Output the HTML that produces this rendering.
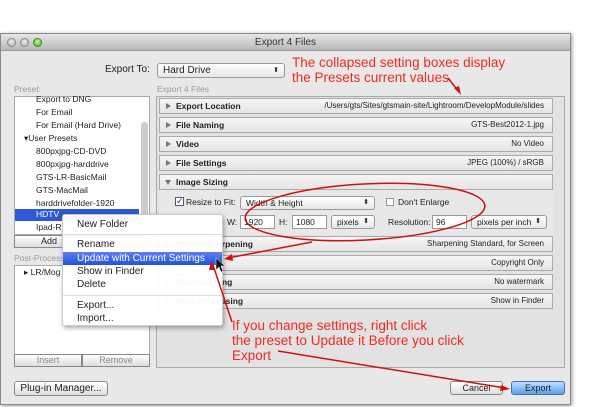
<!DOCTYPE html>
<html><head><style>
*{box-sizing:border-box;margin:0;padding:0}
body{width:600px;height:407px;background:#fff;position:relative;overflow:hidden;font-family:"Liberation Sans",sans-serif;font-size:9px;color:#222}
.a{position:absolute}
.win{left:0;top:33px;width:571px;height:372px;background:#e8e8e8;border:1px solid #888;box-shadow:1px 1px 4px rgba(0,0,0,.4)}
.title{left:0;top:0;width:569px;height:17px;background:linear-gradient(#e6e6e6,#b8b8b8);border-bottom:1px solid #999;text-align:center;font-size:10px;line-height:17px;color:#333}
.dot{width:9px;height:9px;border-radius:50%;top:4px;background:radial-gradient(circle at 50% 35%,#eee,#aaa);border:1px solid #888}
.sec{position:absolute;left:159px;width:394px;height:16px;background:linear-gradient(#f6f6f6,#e4e4e4);border:1px solid #aaa;font-weight:bold;font-size:8.5px;line-height:14px;padding-left:16px}
.sec:before{content:"";position:absolute;left:6px;top:4px;border-left:5px solid #777;border-top:3.5px solid transparent;border-bottom:3.5px solid transparent}
.sec.o:before{border-top:5px solid #777;border-left:3.5px solid transparent;border-right:3.5px solid transparent;border-bottom:0;top:5px;left:5px}
.sec span{position:absolute;right:8px;top:0;font-weight:normal;font-size:8px}
.li{position:absolute;left:36px;font-size:8.5px;line-height:13px}
.red{color:#ee2b1e;font-size:13.5px;line-height:15px}
.btn{background:linear-gradient(#fff,#ddd);border:1px solid #888;border-radius:3px;text-align:center;font-size:9px}
.fld{background:#fff;border:1px solid #999;font-size:8.5px;line-height:12px;padding-left:3px;height:14px}
.pop{background:linear-gradient(#fff,#e6e6e6);border:1px solid #999;border-radius:3px;font-size:8.5px;line-height:12px;padding-left:5px;height:14px}
.mi{position:absolute;left:14px;font-size:10px;line-height:13px}
</style></head><body>
<div class="a win">
 <div class="a title">Export 4 Files</div>
 <div class="a dot" style="left:6px"></div><div class="a dot" style="left:19px"></div><div class="a dot" style="left:32px;background:radial-gradient(circle at 50% 35%,#c8f5a0,#4caa2a);border-color:#3a8a20"></div>
</div>
<div class="a" style="left:105px;top:64px;font-size:10px">Export To:</div>
<div class="a pop" style="left:157px;top:63px;width:128px;height:15px;font-size:10px;line-height:13px">Hard Drive<span style="position:absolute;right:5px;font-size:7px">⬍</span></div>
<div class="a red" style="left:292px;top:55px">The collapsed setting boxes display<br>the Presets current values</div>
<div class="a" style="left:14px;top:84px;color:#999;font-size:8.5px">Preset:</div>
<div class="a" style="left:157px;top:84px;color:#999;font-size:8.5px">Export 4 Files</div>
<div class="a" style="left:14px;top:96px;width:136px;height:139px;background:#fff;border:1px solid #aaa"></div>
<div class="a" style="left:141px;top:122px;width:7px;height:110px;background:#ccc;border-radius:4px"></div>
<div class="li" style="top:93px">Export to DNG</div>
<div class="li" style="top:106px">For Email</div>
<div class="li" style="top:119px">For Email (Hard Drive)</div>
<div class="li" style="top:132px;left:24px">▾User Presets</div>
<div class="li" style="top:145px">800pxjpg-CD-DVD</div>
<div class="li" style="top:158px">800pxjpg-harddrive</div>
<div class="li" style="top:171px">GTS-LR-BasicMail</div>
<div class="li" style="top:184px">GTS-MacMail</div>
<div class="li" style="top:197px">harddrivefolder-1920</div>
<div class="a" style="left:15px;top:209px;width:124px;height:12px;background:#2b5ad3"></div>
<div class="li" style="top:208px;color:#fff">HDTV</div>
<div class="li" style="top:221px">Ipad-R</div>
<div class="a btn" style="left:14px;top:235px;width:136px;height:13px;border-radius:0;line-height:11px;text-align:left;padding-left:26px">Add</div>
<div class="a" style="left:14px;top:253px;color:#999;font-size:8.5px">Post-Process</div>
<div class="a" style="left:14px;top:265px;width:136px;height:90px;background:#fff;border:1px solid #aaa"></div>
<div class="a" style="left:24px;top:267px;font-size:8.5px">▸ LR/Mog</div>
<div class="a btn" style="left:14px;top:354px;width:68px;height:13px;border-radius:0;color:#888;line-height:11px">Insert</div>
<div class="a btn" style="left:82px;top:354px;width:68px;height:13px;border-radius:0;color:#888;line-height:11px">Remove</div>
<div class="a btn" style="left:14px;top:381px;width:94px;height:15px;line-height:13px;font-size:10px">Plug-in Manager...</div>
<div class="a" style="left:156px;top:96px;width:409px;height:272px;border:1px solid #aaa;background:#e2e2e2"></div>
<div class="sec" style="top:98px">Export Location<span>/Users/gts/Sites/gtsmain-site/Lightroom/DevelopModule/slides</span></div>
<div class="sec" style="top:117px">File Naming<span>GTS-Best2012-1.jpg</span></div>
<div class="sec" style="top:136px">Video<span>No Video</span></div>
<div class="sec" style="top:155px">File Settings<span>JPEG (100%) / sRGB</span></div>
<div class="sec o" style="top:174px">Image Sizing</div>
<div class="a" style="left:159px;top:190px;width:394px;height:45px;background:#e8e8e8"></div>
<div class="a" style="left:175px;top:197px;width:9px;height:9px;background:#fff;border:1px solid #557;font-size:9px;line-height:7px;color:#235">✓</div>
<div class="a" style="left:186px;top:197px;font-size:8.5px">Resize to Fit:</div>
<div class="a pop" style="left:240px;top:196px;width:135px">Width &amp; Height<span style="position:absolute;right:5px;font-size:7px">⬍</span></div>
<div class="a" style="left:386px;top:198px;width:8px;height:8px;background:#fff;border:1px solid #999"></div>
<div class="a" style="left:398px;top:197px;font-size:8.5px">Don't Enlarge</div>
<div class="a" style="left:227px;top:217px;font-size:8.5px">W:</div>
<div class="a fld" style="left:240px;top:215px;width:35px">1920</div>
<div class="a" style="left:279px;top:217px;font-size:8.5px">H:</div>
<div class="a fld" style="left:292px;top:215px;width:35px">1080</div>
<div class="a pop" style="left:331px;top:215px;width:44px">pixels<span style="position:absolute;right:5px;font-size:7px">⬍</span></div>
<div class="a" style="left:388px;top:217px;font-size:8.5px">Resolution:</div>
<div class="a fld" style="left:432px;top:215px;width:35px">96</div>
<div class="a pop" style="left:471px;top:215px;width:76px">pixels per inch<span style="position:absolute;right:5px;font-size:7px">⬍</span></div>
<div class="sec" style="top:236px">Output Sharpening<span>Sharpening Standard, for Screen</span></div>
<div class="sec" style="top:255px">Metadata<span>Copyright Only</span></div>
<div class="sec" style="top:274px">Watermarking<span>No watermark</span></div>
<div class="sec" style="top:293px">Post-Processing<span>Show in Finder</span></div>
<div class="a btn" style="left:450px;top:381px;width:53px;height:14px;line-height:12px">Cancel</div>
<div class="a btn" style="left:511px;top:381px;width:54px;height:14px;line-height:12px;background:linear-gradient(#bfe0ff,#5aa0ea);border-color:#4a6fa8">Export</div>
<div class="a" style="left:62px;top:214px;width:161px;height:112px;background:rgba(255,255,255,.97);border:1px solid #ccc;border-radius:3px;box-shadow:1px 2px 5px rgba(0,0,0,.35)">
 <div class="mi" style="top:3px">New Folder</div>
 <div class="a" style="left:0;top:19px;width:159px;height:1px;background:#ddd"></div>
 <div class="mi" style="top:23px">Rename</div>
 <div class="a" style="left:0;top:37px;width:159px;height:13px;background:linear-gradient(#5a7ff0,#2452d8)"></div>
 <div class="mi" style="top:37px;color:#fff">Update with Current Settings</div>
 <div class="mi" style="top:50px">Show in Finder</div>
 <div class="mi" style="top:63px">Delete</div>
 <div class="a" style="left:0;top:80px;width:159px;height:1px;background:#ddd"></div>
 <div class="mi" style="top:84px">Export...</div>
 <div class="mi" style="top:97px">Import...</div>
</div>
<div class="a red" style="left:232px;top:318px">If you change settings, right click<br>the preset to Update it Before you click<br>Export</div>
<svg class="a" style="left:0;top:0" width="600" height="407">
 <g fill="none" stroke="#d01010" stroke-width="1.5">
  <ellipse cx="365" cy="212" rx="120" ry="28" transform="rotate(-3 365 212)"/>
  <line x1="448" y1="78" x2="459" y2="92"/>
  <line x1="312" y1="242" x2="228" y2="258"/>
  <line x1="232" y1="322" x2="213" y2="265"/>
  <line x1="278" y1="351" x2="505" y2="388"/>
 </g>
 <g fill="#d01010">
  <polygon points="461,95 454,88 459,86"/>
  <polygon points="224,259 232,254 233,261"/>
  <polygon points="211,261 215,270 209,270"/>
  <polygon points="510,389 501,385 500,391"/>
 </g>
 <polygon points="216,258 216,270 219,267 221,272 223,271 221,266 225,266" fill="#111" stroke="#fff" stroke-width=".5"/>
</svg>
</body></html>
